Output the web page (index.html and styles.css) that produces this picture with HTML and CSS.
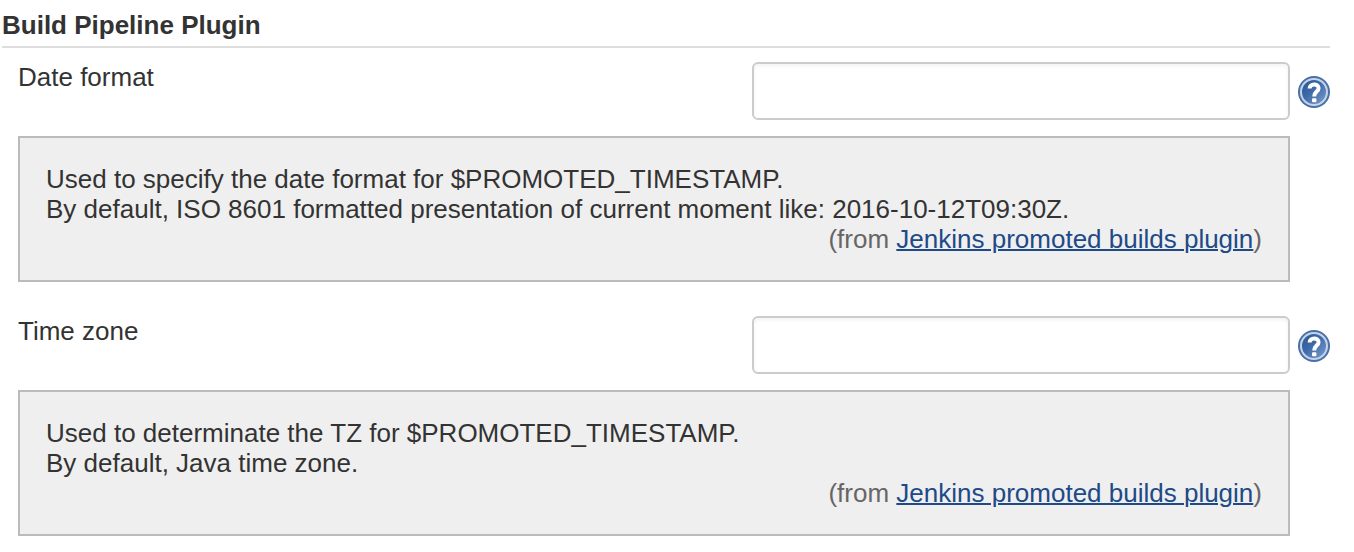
FILE: index.html
```html
<!DOCTYPE html>
<html lang="en">
<head>
<meta charset="utf-8">
<title>Build Pipeline Plugin</title>
<link rel="stylesheet" href="styles.css">
</head>
<body>
<form class="config">
  <h1 class="section-title">Build Pipeline Plugin</h1>
  <section class="setting">
    <div class="setting-row">
      <label class="setting-label" for="date-format">Date format</label>
      <input class="setting-input" id="date-format" type="text">
      <button class="help-button" type="button" aria-label="Help for Date format">
        <svg class="help-icon" viewBox="0 0 32 32" aria-hidden="true">
          <defs>
            <linearGradient id="disc" x1="0" y1="0" x2="1" y2="1">
              <stop offset="0" stop-color="#2c5796"/>
              <stop offset="0.4" stop-color="#3a67a6"/>
              <stop offset="1" stop-color="#7da0cf"/>
            </linearGradient>
          </defs>
          <circle cx="16" cy="16" r="16" fill="#4a70a8"/>
          <circle cx="16" cy="16" r="13" fill="url(#disc)" stroke="#c6d4e8" stroke-width="2"/>
          <path d="M11.6 12.6C11.6 7.2 20.6 7.2 20.6 12.2C20.6 15.6 16.2 15.6 16.2 20.4" fill="none" stroke="#fff" stroke-width="4"/>
          <rect x="14" y="22.2" width="4.4" height="4" rx="1" fill="#fff"/>
        </svg>
      </button>
    </div>
    <div class="help-box">
      <p class="help-text">Used to specify the date format for $PROMOTED_TIMESTAMP.<br>By default, ISO 8601 formatted presentation of current moment like: 2016-10-12T09:30Z.</p>
      <p class="help-source">(from <a class="help-link" href="#">Jenkins promoted builds plugin</a>)</p>
    </div>
  </section>
  <section class="setting">
    <div class="setting-row">
      <label class="setting-label" for="time-zone">Time zone</label>
      <input class="setting-input" id="time-zone" type="text">
      <button class="help-button" type="button" aria-label="Help for Time zone">
        <svg class="help-icon" viewBox="0 0 32 32" aria-hidden="true">
          <circle cx="16" cy="16" r="16" fill="#4a70a8"/>
          <circle cx="16" cy="16" r="13" fill="url(#disc)" stroke="#c6d4e8" stroke-width="2"/>
          <path d="M11.6 12.6C11.6 7.2 20.6 7.2 20.6 12.2C20.6 15.6 16.2 15.6 16.2 20.4" fill="none" stroke="#fff" stroke-width="4"/>
          <rect x="14" y="22.2" width="4.4" height="4" rx="1" fill="#fff"/>
        </svg>
      </button>
    </div>
    <div class="help-box">
      <p class="help-text">Used to determinate the TZ for $PROMOTED_TIMESTAMP.<br>By default, Java time zone.</p>
      <p class="help-source">(from <a class="help-link" href="#">Jenkins promoted builds plugin</a>)</p>
    </div>
  </section>
</form>
</body>
</html>
```
FILE: styles.css
```css
* {
  box-sizing: border-box;
}

body {
  margin: 0;
  background: #fff;
  color: #333;
  font: 26px/30px "Liberation Sans", Arial, sans-serif;
}

.config {
  padding: 10px 24px 0 2px;
}

.section-title {
  margin: 0 0 14px;
  padding-bottom: 6px;
  border-bottom: 2px solid #ddd;
  font-size: 26px;
  font-weight: bold;
  line-height: 30px;
}

.setting {
  padding-left: 16px;
}

.setting + .setting {
  margin-top: 34px;
}

.setting-row {
  display: grid;
  grid-template-columns: 27fr 20fr 32px;
  column-gap: 8px;
  align-items: center;
}

.setting-label {
  align-self: start;
}

.setting-input {
  width: 100%;
  height: 58px;
  padding: 12px;
  border: 2px solid #ccc;
  border-radius: 6px;
  background: #fff;
  box-shadow: inset 0 2px 4px rgba(0, 0, 0, 0.05);
  color: #333;
  font: inherit;
}

.help-button {
  padding: 2px 0 0;
  border: 0;
  background: none;
}

.help-icon {
  display: block;
  width: 32px;
  height: 32px;
}

.help-box {
  margin: 16px 40px 0 0;
  padding: 26px;
  border: 2px solid #bbb;
  background: #efefef;
}

.help-text,
.help-source {
  margin: 0;
}

.help-source {
  color: #666;
  text-align: right;
}

.help-link {
  color: #204a87;
  text-decoration-thickness: 2px;
}
```
